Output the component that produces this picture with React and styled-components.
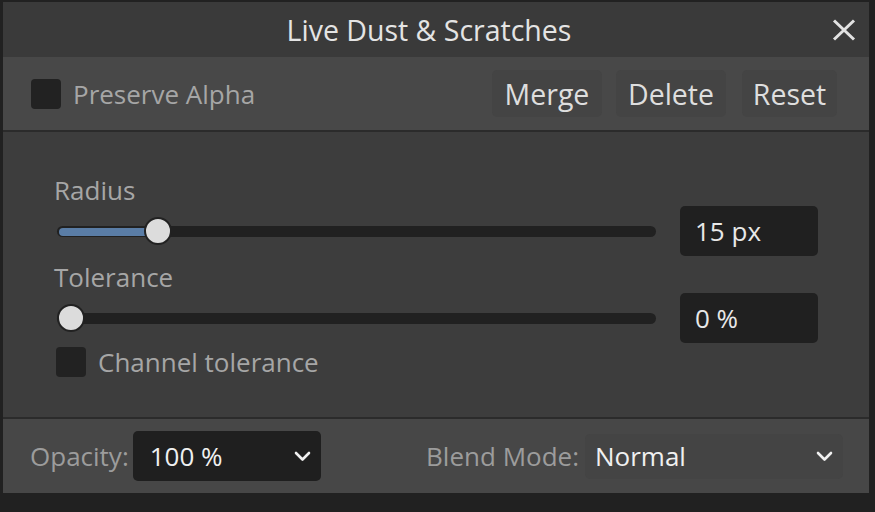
import React from "react";
import styled, { createGlobalStyle } from "styled-components";

const GlobalStyle = createGlobalStyle`
  html, body { margin: 0; padding: 0; background: #212121; }
  body { font-family: "Open Sans", "Noto Sans", sans-serif; }
  * { box-sizing: border-box; }
`;

const Page = styled.div`
  width: 875px;
  height: 512px;
  padding: 2px 0 0 3px;
  background: #212121;
`;

const Panel = styled.div`
  width: 866px;
  display: flex;
  flex-direction: column;
`;

const TitleBar = styled.div`
  height: 55px;
  background: #3a3a3a;
  display: grid;
  grid-template-columns: 1fr auto 1fr;
  align-items: center;
`;

const Title = styled.div`
  grid-column: 2;
  font-size: 28.5px;
  color: #e4e4e4;
  margin-right: 14px;
`;

const CloseButton = styled.button`
  grid-column: 3;
  justify-self: end;
  margin-right: 11px;
  width: 28px;
  height: 28px;
  border: 0;
  padding: 0;
  background: transparent;
  display: flex;
  align-items: center;
  justify-content: center;
`;

const Toolbar = styled.div`
  height: 75px;
  background: #484848;
  border-bottom: 2px solid #2b2b2b;
  display: flex;
  align-items: center;
  padding: 0 32px 0 28px;
`;

const CheckRow = styled.label`
  display: flex;
  align-items: center;
  gap: 12px;
  color: #a6a6a6;
  font-size: 26px;
`;

const Box = styled.span`
  width: 30px;
  height: 30px;
  border-radius: 4px;
  background: #222222;
`;

const Buttons = styled.div`
  margin-left: auto;
  display: flex;
`;

const Button = styled.button`
  height: 47px;
  width: ${(p) => p.$w}px;
  margin-left: ${(p) => p.$ml || 0}px;
  border: 0;
  border-radius: 5px;
  background: #444444;
  color: #dedede;
  font-family: inherit;
  font-size: 28.5px;
  padding: 0;
`;

const Main = styled.div`
  height: 287px;
  background: #3d3d3d;
  border-bottom: 2px solid #2b2b2b;
  padding: 42px 51px 0 48px;
  display: flex;
  flex-direction: column;
`;

const FieldLabel = styled.div`
  font-size: 26px;
  line-height: 32px;
  height: 32px;
  color: #a6a6a6;
  padding-left: 3px;
`;

const SliderRow = styled.div`
  height: 50px;
  display: flex;
  align-items: center;
  gap: 24px;
  margin-bottom: ${(p) => p.$mb || 0}px;
`;

const SliderWrap = styled.div`
  position: relative;
  flex: 1;
  height: 28px;
  display: flex;
  align-items: center;
  margin-left: 6px;
`;

const Track = styled.div`
  position: relative;
  width: 100%;
  height: 11px;
  border-radius: 6px;
  background: #212121;
`;

const Fill = styled.div`
  position: absolute;
  left: 2px;
  top: 2px;
  bottom: 1px;
  border-radius: 4px;
  background: #5a7da6;
`;

const Thumb = styled.div`
  position: absolute;
  top: 0;
  width: 28px;
  height: 28px;
  border-radius: 50%;
  background: #dcdcdc;
  border: 2px solid #222222;
`;

const ValueBox = styled.div`
  width: 138px;
  height: 50px;
  border-radius: 5px;
  background: #202020;
  color: #e8e8e8;
  font-size: 26px;
  display: flex;
  align-items: center;
  padding-left: 15px;
`;

const ChannelRow = styled(CheckRow)`
  margin-top: 1px;
  padding-left: 5px;
`;

const Footer = styled.div`
  height: 74px;
  background: #474747;
  display: flex;
  align-items: center;
  padding: 0 26px 0 27px;
`;

const FooterLabel = styled.span`
  font-size: 26px;
  color: #9c9c9c;
  margin-right: ${(p) => p.$mr}px;
`;

const Select = styled.div`
  width: ${(p) => p.$w}px;
  height: ${(p) => p.$h}px;
  border-radius: 5px;
  background: ${(p) => p.$bg};
  color: #f0f0f0;
  font-size: 26px;
  display: flex;
  align-items: center;
  justify-content: space-between;
  padding: 0 10px 0 ${(p) => p.$pl}px;
`;

const BlendGroup = styled.div`
  margin-left: auto;
  display: flex;
  align-items: center;
`;

const Chevron = () => (
  <svg width="17" height="11" viewBox="0 0 17 11">
    <path d="M2 2 L8.5 8.5 L15 2" fill="none" stroke="#f0f0f0" strokeWidth="2.6" strokeLinecap="round" strokeLinejoin="round" />
  </svg>
);

const Slider = ({ value }) => {
  const travel = 599 - 28;
  const x = Math.round(value * travel);
  return (
    <SliderWrap>
      <Track>{value > 0 && <Fill style={{ width: x + 12 }} />}</Track>
      <Thumb style={{ left: x }} />
    </SliderWrap>
  );
};

export default function App() {
  return (
    <Page>
      <GlobalStyle />
      <Panel>
        <TitleBar>
          <Title>Live Dust &amp; Scratches</Title>
          <CloseButton aria-label="Close">
            <svg width="26" height="22" viewBox="0 0 26 22">
              <path d="M3 1.5 L23 20.5 M23 1.5 L3 20.5" stroke="#e2e2e2" strokeWidth="3" />
            </svg>
          </CloseButton>
        </TitleBar>
        <Toolbar>
          <CheckRow>
            <Box />
            Preserve Alpha
          </CheckRow>
          <Buttons>
            <Button $w={110}>Merge</Button>
            <Button $w={110} $ml={14}>Delete</Button>
            <Button $w={95} $ml={16}>Reset</Button>
          </Buttons>
        </Toolbar>
        <Main>
          <FieldLabel>Radius</FieldLabel>
          <SliderRow $mb={5}>
            <Slider value={0.152} />
            <ValueBox>15 px</ValueBox>
          </SliderRow>
          <FieldLabel>Tolerance</FieldLabel>
          <SliderRow>
            <Slider value={0} />
            <ValueBox>0 %</ValueBox>
          </SliderRow>
          <ChannelRow>
            <Box />
            Channel tolerance
          </ChannelRow>
        </Main>
        <Footer>
          <FooterLabel $mr={4}>Opacity:</FooterLabel>
          <Select $w={188} $h={50} $bg="#1f1f1f" $pl={17}>
            100 %
            <Chevron />
          </Select>
          <BlendGroup>
            <FooterLabel $mr={6}>Blend Mode:</FooterLabel>
            <Select $w={258} $h={45} $bg="#444444" $pl={10}>
              Normal
              <Chevron />
            </Select>
          </BlendGroup>
        </Footer>
      </Panel>
    </Page>
  );
}
